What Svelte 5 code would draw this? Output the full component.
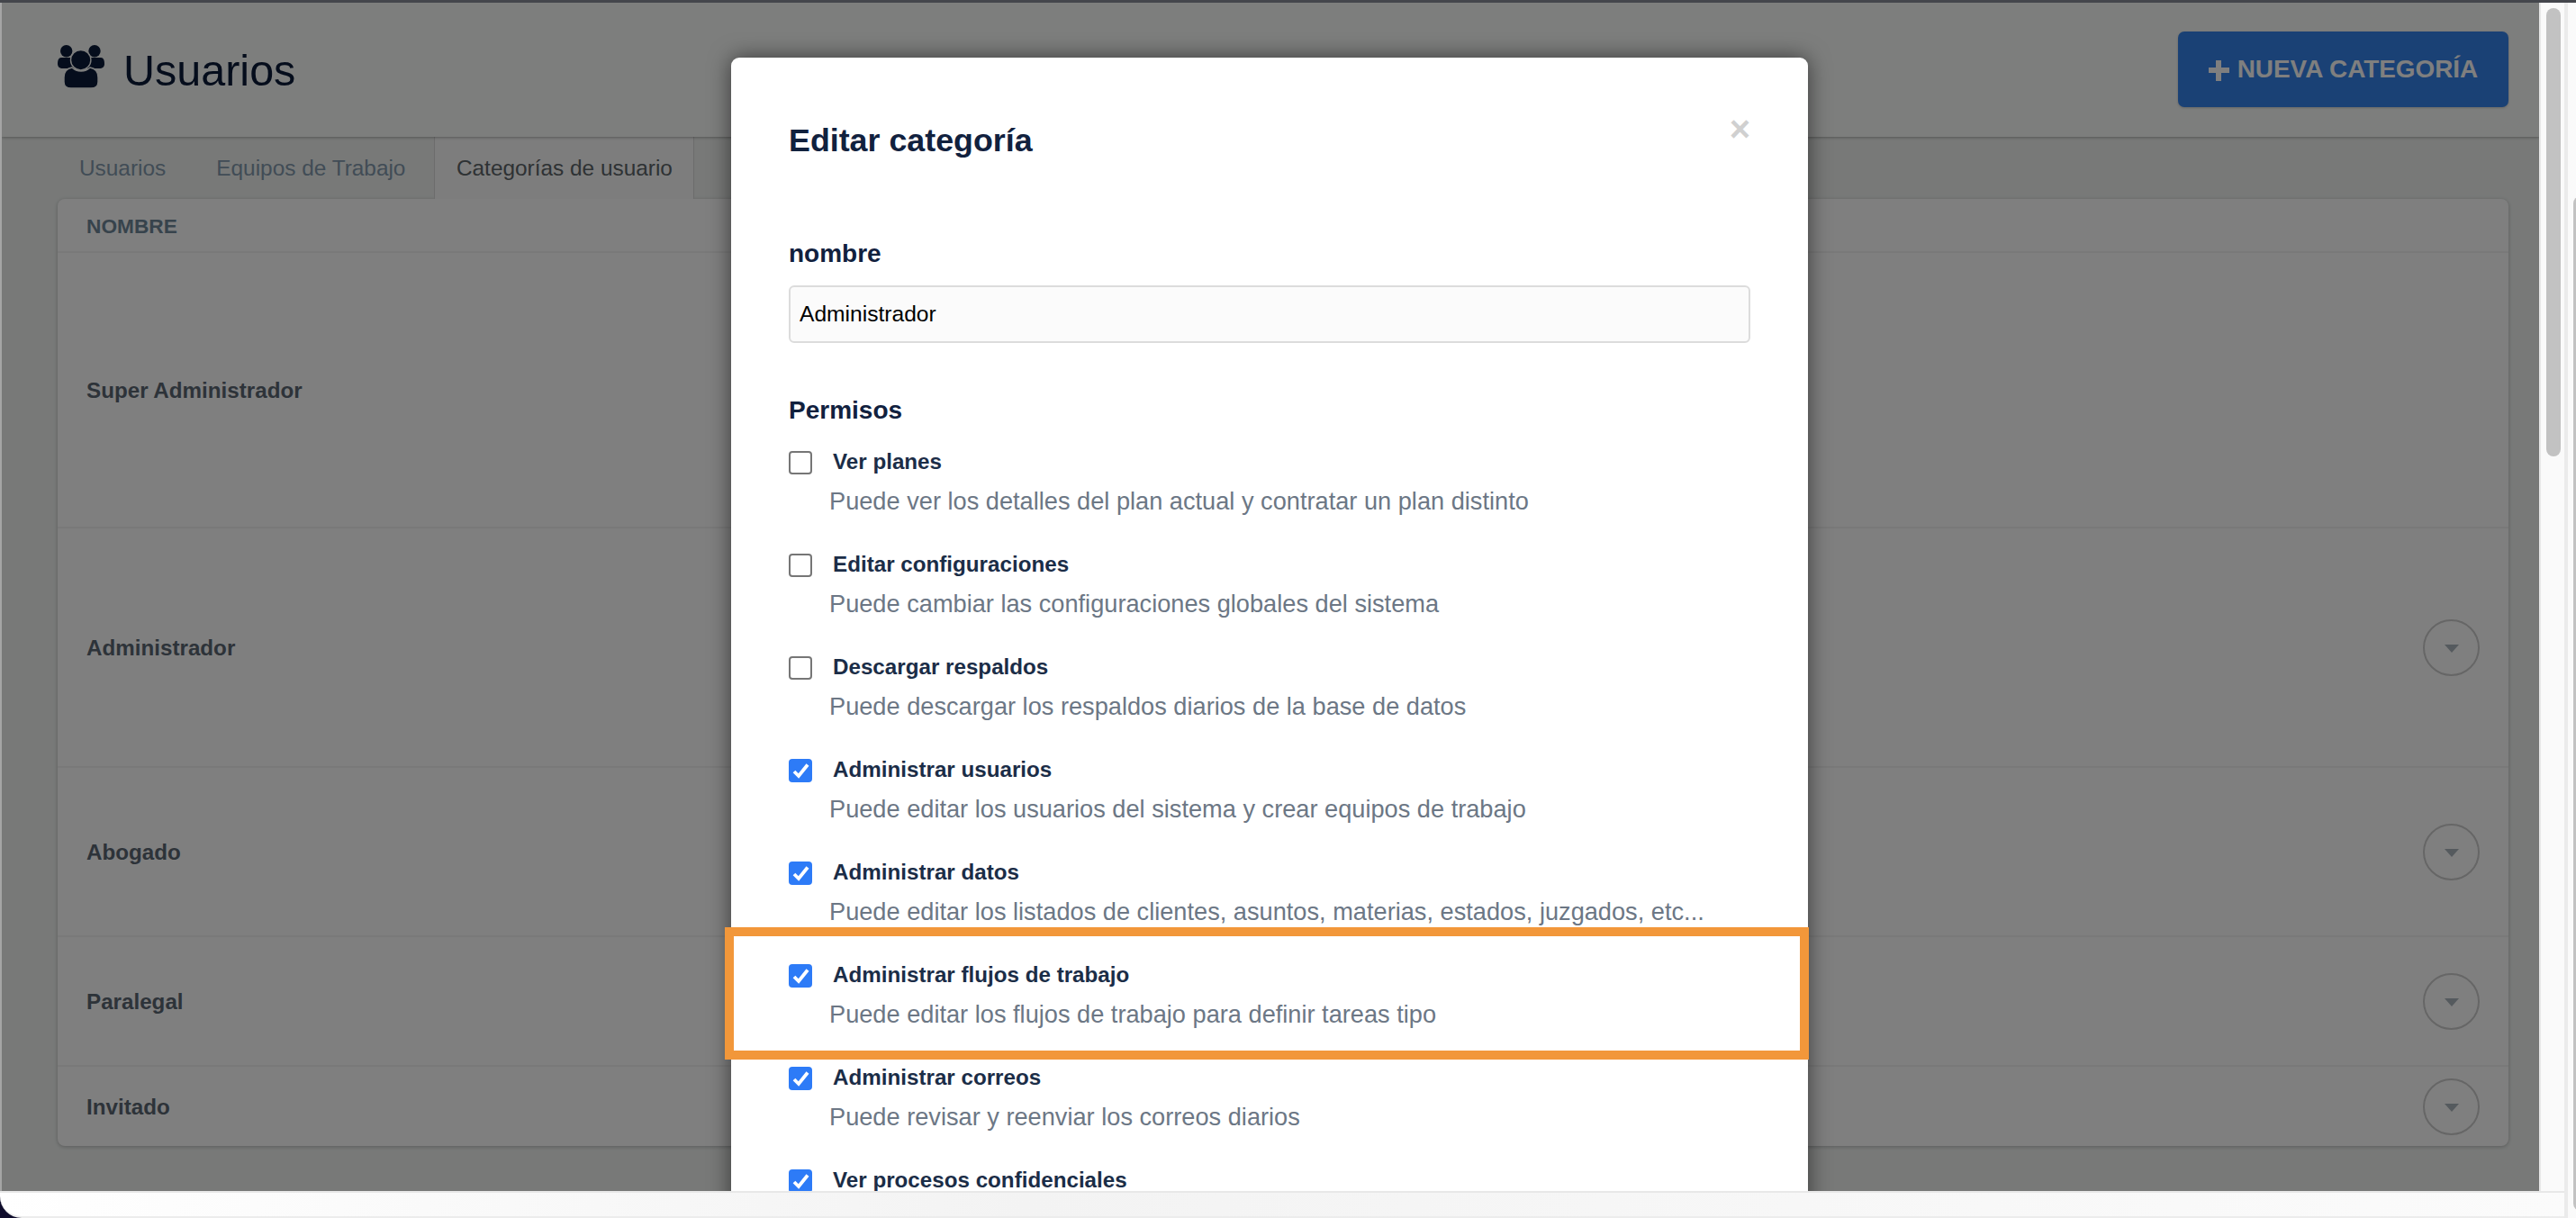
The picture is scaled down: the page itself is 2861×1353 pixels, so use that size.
<script lang="ts">
  const rows = [
    { name: 'Super Administrador', height: 306, menu: false },
    { name: 'Administrador', height: 266, menu: true },
    { name: 'Abogado', height: 188, menu: true },
    { name: 'Paralegal', height: 144, menu: true },
    { name: 'Invitado', height: 90, menu: true },
  ];

  const permissions = [
    { label: 'Ver planes', desc: 'Puede ver los detalles del plan actual y contratar un plan distinto', checked: false },
    { label: 'Editar configuraciones', desc: 'Puede cambiar las configuraciones globales del sistema', checked: false },
    { label: 'Descargar respaldos', desc: 'Puede descargar los respaldos diarios de la base de datos', checked: false },
    { label: 'Administrar usuarios', desc: 'Puede editar los usuarios del sistema y crear equipos de trabajo', checked: true },
    { label: 'Administrar datos', desc: 'Puede editar los listados de clientes, asuntos, materias, estados, juzgados, etc...', checked: true },
    { label: 'Administrar flujos de trabajo', desc: 'Puede editar los flujos de trabajo para definir tareas tipo', checked: true },
    { label: 'Administrar correos', desc: 'Puede revisar y reenviar los correos diarios', checked: true },
    { label: 'Ver procesos confidenciales', desc: '', checked: true },
  ];
</script>

<div class="window">
  <div class="top-strip"></div>
  <div class="body">
    <div class="main">
      <div class="middle">
        <div class="page">
          <header class="page-header">
            <h1>
              <svg class="users-icon" viewBox="0 0 52 48">
                <circle cx="9.7" cy="6.7" r="6.7" fill="currentColor" />
                <circle cx="41" cy="6.7" r="6.7" fill="currentColor" />
                <path d="M4 14h12c3 0 5 3 5 6v6H6c-4 0-6-2-6-5 0-4 1-7 4-7z" fill="currentColor" />
                <path d="M48 14H36c-3 0-5 3-5 6v6h15c4 0 6-2 6-5 0-4-1-7-4-7z" fill="currentColor" />
                <path class="outlined" d="M16 25c3 3 6 4 10 4s7-1 10-4c6 1 9 5 9 11v5c0 5-4 7-8 7H15c-4 0-8-2-8-7v-5c0-6 3-10 9-11z" fill="currentColor" />
                <circle class="outlined" cx="25.7" cy="16.7" r="11.2" fill="currentColor" />
              </svg>
              <span>Usuarios</span>
            </h1>
            <button class="new-btn">
              <span class="plus"></span>
              NUEVA CATEGORÍA
            </button>
          </header>

          <div class="content">
            <nav class="tabs">
              <span class="tab">Usuarios</span>
              <span class="tab">Equipos de Trabajo</span>
              <span class="tab active">Categorías de usuario</span>
            </nav>
            <div class="card">
              <div class="card-head">NOMBRE</div>
              {#each rows as row}
                <div class="row" style="height: {row.height}px">
                  <span class="row-name">{row.name}</span>
                  {#if row.menu}
                    <span class="row-menu"><span class="caret"></span></span>
                  {/if}
                </div>
              {/each}
            </div>
          </div>

          <div class="backdrop"></div>

          <div class="modal">
            <div class="modal-head">
              <h2>Editar categoría</h2>
              <span class="close">×</span>
            </div>
            <label class="field-label" for="cat-name">nombre</label>
            <input id="cat-name" class="field" value="Administrador" />
            <h3>Permisos</h3>
            <ul class="perms">
              {#each permissions as perm}
                <li>
                  <div class="perm-line">
                    <span class="box {perm.checked ? 'checked' : ''}">
                      {#if perm.checked}
                        <svg viewBox="0 0 26 26" width="26" height="26">
                          <path d="M6 14l5 5 10-12.5" fill="none" stroke="#fff" stroke-width="3.8" />
                        </svg>
                      {/if}
                    </span>
                    <span class="perm-label">{perm.label}</span>
                  </div>
                  {#if perm.desc}<p class="perm-desc">{perm.desc}</p>{/if}
                </li>
              {/each}
            </ul>
          </div>

          <div class="highlight"></div>
        </div>

        <div class="scroll-track"><span class="thumb"></span></div>
      </div>
      <div class="bottom-bar"><div class="bottom-fill"></div></div>
    </div>
    <div class="outer-track"><span class="thumb"></span></div>
  </div>
</div>

<style>
  :global(body) {
    margin: 0;
    background: #fff;
  }

  .window {
    width: 2861px;
    height: 1353px;
    display: flex;
    flex-direction: column;
    overflow: hidden;
    font-family: "Liberation Sans", Arial, sans-serif;
    background: #fafafa;
  }

  .top-strip {
    height: 3px;
    flex: none;
    background: #44464c;
  }

  .body {
    flex: 1;
    display: flex;
    min-height: 0;
  }

  .main {
    width: 2848px;
    flex: none;
    display: flex;
    flex-direction: column;
  }

  .middle {
    flex: none;
    height: 1320px;
    display: flex;
    background: #a5a5a5;
  }

  .page {
    position: relative;
    width: 2818px;
    flex: none;
    margin-left: 2px;
    overflow: hidden;
    background: #f0f3f1;
  }

  .page-header {
    height: 149px;
    box-sizing: border-box;
    padding: 0 34px 0 62px;
    display: flex;
    align-items: flex-start;
    justify-content: space-between;
    background: #fbfdfb;
    color: #0b1a38;
    box-shadow: 0 1px 3px rgba(0, 0, 0, 0.3);
    position: relative;
  }

  h1 {
    margin: 47px 0 0;
    display: flex;
    align-items: flex-start;
    gap: 21px;
    font-size: 48.5px;
    font-weight: 400;
    line-height: 48px;
    color: #0b1a38;
  }

  h1 span {
    margin-top: 4px;
  }

  .users-icon {
    width: 52px;
    height: 48px;
    flex: none;
  }

  .outlined {
    stroke: #fbfdfb;
    stroke-width: 1.4;
  }

  .new-btn {
    margin-top: 32px;
    width: 367px;
    height: 84px;
    display: flex;
    align-items: center;
    justify-content: center;
    gap: 9px;
    border: 0;
    border-radius: 7px;
    background: #3482ea;
    color: #fff;
    font: 700 27.9px "Liberation Sans", Arial, sans-serif;
    box-shadow: 0 1px 3px rgba(0, 0, 0, 0.2);
  }

  .plus {
    width: 23px;
    height: 23px;
    margin-top: 2px;
    background:
      linear-gradient(#fff, #fff) center / 100% 6px no-repeat,
      linear-gradient(#fff, #fff) center / 6px 100% no-repeat;
    border-radius: 2px;
  }

  .content {
    padding: 0 34px 0 62px;
  }

  .tabs {
    height: 69px;
    display: flex;
    font-size: 24.4px;
    color: #8399ac;
  }

  .tab {
    display: flex;
    align-items: center;
    padding: 0 24px;
    margin-right: 8px;
  }

  .tab.active {
    margin-right: 0;
    background: #fbfbfb;
    color: #5c6468;
    border-left: 1px solid #d8d8d8;
    border-right: 1px solid #d8d8d8;
    padding: 0 23.5px;
  }

  .card {
    background: #fff;
    border-radius: 8px;
    box-shadow: 0 1px 4px rgba(0, 0, 0, 0.25);
  }

  .card-head {
    height: 58px;
    display: flex;
    align-items: center;
    padding: 2px 0 0 32px;
    box-sizing: border-box;
    font-size: 22.7px;
    font-weight: 700;
    color: #6f8799;
  }

  .row {
    display: flex;
    align-items: center;
    justify-content: space-between;
    box-sizing: border-box;
    padding: 0 32px;
    border-top: 2px solid #f2f2f2;
  }

  .row-name {
    margin-top: 2px;
    font-size: 24.2px;
    font-weight: 700;
    color: #5b6673;
  }

  .row-menu {
    width: 63px;
    height: 63px;
    box-sizing: border-box;
    border: 2px solid #cccccc;
    border-radius: 50%;
    display: flex;
    align-items: center;
    justify-content: center;
  }

  .caret {
    width: 0;
    height: 0;
    border-left: 8px solid transparent;
    border-right: 8px solid transparent;
    border-top: 9px solid #aab4bc;
    margin-top: 3px;
  }

  .backdrop {
    position: absolute;
    inset: 0;
    background: rgba(0, 0, 0, 0.5);
  }

  .modal {
    position: absolute;
    left: 810px;
    top: 61px;
    width: 1196px;
    height: 1400px;
    box-sizing: border-box;
    padding: 0 64px;
    background: #fff;
    border-radius: 9px;
    box-shadow: 0 0 24px rgba(0, 0, 0, 0.55);
  }

  .modal-head {
    height: 120px;
    display: flex;
    justify-content: space-between;
    align-items: flex-start;
  }

  h2 {
    margin: 70px 0 0;
    font-size: 35.8px;
    line-height: 44px;
    font-weight: 700;
    color: #11213e;
  }

  .close {
    margin: 50px 0 0;
    font-size: 40px;
    line-height: 58px;
    font-weight: 700;
    color: #d0d0d0;
  }

  .field-label {
    display: block;
    margin-top: 80px;
    font-size: 28px;
    line-height: 36px;
    font-weight: 700;
    color: #11213e;
  }

  .field {
    display: block;
    width: 100%;
    height: 64px;
    margin-top: 17px;
    box-sizing: border-box;
    padding: 0 10px;
    background: #fbfbfb;
    border: 2px solid #dcdcdc;
    border-radius: 6px;
    font: 24.6px "Liberation Sans", Arial, sans-serif;
    color: #000;
  }

  h3 {
    margin: 57px 0 0;
    font-size: 28px;
    line-height: 36px;
    font-weight: 700;
    color: #11213e;
  }

  .perms {
    list-style: none;
    margin: 27px 0 0;
    padding: 0;
  }

  .perms li {
    height: 114px;
  }

  .perm-line {
    display: flex;
    align-items: center;
    height: 26px;
    gap: 23px;
  }

  .box {
    width: 26px;
    height: 26px;
    box-sizing: border-box;
    border: 2px solid #767676;
    border-radius: 4px;
    flex: none;
  }

  .box.checked {
    border: 0;
    background: #2d7bf7;
  }

  .box svg {
    display: block;
  }

  .perm-label {
    margin-top: -2px;
    font-size: 24.2px;
    font-weight: 700;
    color: #1b2d47;
  }

  .perm-desc {
    margin: 14px 0 0 45px;
    font-size: 27.2px;
    line-height: 32px;
    color: #6c7785;
  }

  .highlight {
    position: absolute;
    left: 803px;
    top: 1027px;
    width: 1204px;
    height: 147px;
    box-sizing: border-box;
    border: 10px solid #f2973a;
  }

  .scroll-track {
    flex: 1;
    position: relative;
    background: #fafafa;
    border-left: 2px solid #e8e8e8;
  }

  .thumb {
    position: absolute;
    background: #c2c2c2;
    border-radius: 8px;
  }

  .scroll-track .thumb {
    left: 6px;
    top: 6px;
    width: 16px;
    height: 498px;
  }

  .outer-track {
    flex: 1;
    position: relative;
    background: #fafafa;
    border-left: 4px solid #ebebeb;
  }

  .outer-track .thumb {
    left: 6px;
    top: 215px;
    width: 20px;
    height: 1127px;
  }

  .bottom-bar {
    flex: 1;
    background: #0f0d2c;
  }

  .bottom-fill {
    height: 100%;
    box-sizing: border-box;
    background: linear-gradient(100deg, #fff, #f3f3f3 40%, #fbfbfb);
    border-top: 2px solid #e8e8e8;
    border-bottom: 2px solid #ececec;
    border-bottom-left-radius: 24px;
  }
</style>
